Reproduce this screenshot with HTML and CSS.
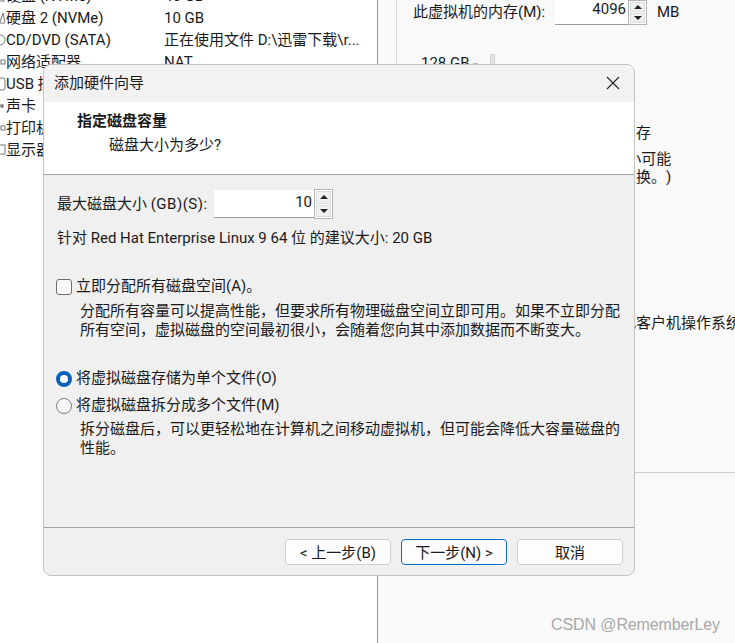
FILE: index.html
```html
<!DOCTYPE html>
<html lang="zh-CN">
<head>
    <meta charset="UTF-8">
    <title>添加硬件向导</title>
    <link rel="stylesheet" href="styles.css">
</head>
<body>

<div class="page">
    <div class="devices">
        <div class="device">
            <svg class="device-icon" viewBox="0 0 6 14"><rect x="-6" y="2" width="10" height="10" fill="none" stroke="#777"/></svg>
            <span class="device-name">硬盘 (NVMe)</span>
            <span>40 GB</span>
        </div>
        <div class="device">
            <svg class="device-icon" viewBox="0 0 6 14"><path d="M0 11L3 2L5 11M0 12H5" fill="none" stroke="#777"/></svg>
            <span class="device-name">硬盘 2 (NVMe)</span>
            <span>10 GB</span>
        </div>
        <div class="device">
            <svg class="device-icon" viewBox="0 0 6 14"><circle cx="0" cy="7" r="5" fill="none" stroke="#777"/></svg>
            <span class="device-name">CD/DVD (SATA)</span>
            <span>正在使用文件 D:\迅雷下载\r...</span>
        </div>
        <div class="device">
            <svg class="device-icon" viewBox="0 0 6 14"><rect x="1" y="5" width="4" height="4" fill="none" stroke="#777"/></svg>
            <span class="device-name">网络适配器</span>
            <span>NAT</span>
        </div>
        <div class="device">
            <svg class="device-icon" viewBox="0 0 6 14"><rect x="-3" y="1" width="8" height="12" rx="2" fill="none" stroke="#777"/></svg>
            <span class="device-name">USB 控制器</span>
        </div>
        <div class="device">
            <svg class="device-icon" viewBox="0 0 6 14"><circle cx="2" cy="7" r="2" fill="#888"/></svg>
            <span class="device-name">声卡</span>
        </div>
        <div class="device">
            <svg class="device-icon" viewBox="0 0 6 14"><rect x="1" y="5" width="4" height="4" fill="none" stroke="#777"/></svg>
            <span class="device-name">打印机</span>
        </div>
        <div class="device">
            <svg class="device-icon" viewBox="0 0 6 14"><rect x="-2" y="2" width="7" height="9" fill="none" stroke="#777"/></svg>
            <span class="device-name">显示器</span>
        </div>
    </div>

    <div class="settings">
        <div class="memory-box">
            <div class="memory-row">
                <span class="memory-label">此虚拟机的内存(M):</span>
                <div class="spinner memory-spinner">
                    <div class="spinner-value">4096</div>
                    <div class="spinner-buttons">
                        <div class="spinner-button"><i class="arrow-up"></i></div>
                        <div class="spinner-button"><i class="arrow-down"></i></div>
                    </div>
                </div>
                <span class="memory-unit">MB</span>
            </div>
            <div class="scale-row">
                <span class="scale-label">128 GB</span>
                <i class="scale-tick"></i>
                <i class="scale-track"></i>
            </div>
            <div class="note note-max">最大建议内存</div>
            <div class="note note-swap">(超出此大小可能<br>发生内存交换。)</div>
            <div class="note note-guest">建议用于此客户机操作系统的内存</div>
        </div>
    </div>
</div>

<div class="dialog">
    <div class="dialog-title">
        <span>添加硬件向导</span>
        <svg class="close-icon" viewBox="0 0 14 14"><path d="M1 1L13 13M13 1L1 13" stroke="#222" stroke-width="1.1"/></svg>
    </div>
    <div class="dialog-header">
        <div class="header-title">指定磁盘容量</div>
        <div class="header-sub">磁盘大小为多少?</div>
    </div>
    <div class="dialog-body">
        <div class="size-row">
            <span class="size-label">最大磁盘大小 <span class="size-key">(GB)(S):</span></span>
            <div class="spinner disk-spinner">
                <div class="spinner-value">10</div>
                <div class="spinner-buttons">
                    <div class="spinner-button"><i class="arrow-up"></i></div>
                    <div class="spinner-button"><i class="arrow-down"></i></div>
                </div>
            </div>
        </div>
        <div class="hint">针对 Red Hat Enterprise Linux 9 64 位 的建议大小: 20 GB</div>

        <div class="option option-alloc">
            <i class="checkbox"></i>
            <span>立即分配所有磁盘空间(A)。</span>
        </div>
        <p class="option-desc alloc-desc">分配所有容量可以提高性能，但要求所有物理磁盘空间立即可用。如果不立即分配所有空间，虚拟磁盘的空间最初很小，会随着您向其中添加数据而不断变大。</p>

        <div class="option option-single">
            <i class="radio radio-on"></i>
            <span>将虚拟磁盘存储为单个文件(O)</span>
        </div>
        <div class="option option-split">
            <i class="radio"></i>
            <span>将虚拟磁盘拆分成多个文件(M)</span>
        </div>
        <p class="option-desc split-desc">拆分磁盘后，可以更轻松地在计算机之间移动虚拟机，但可能会降低大容量磁盘的性能。</p>
    </div>
    <div class="dialog-footer">
        <button class="wizard-button">&lt; 上一步(B)</button>
        <button class="wizard-button wizard-button-default">下一步(N) &gt;</button>
        <button class="wizard-button">取消</button>
    </div>
</div>

<div class="watermark">CSDN @RememberLey</div>

</body>
</html>
```

FILE: styles.css
```css
body {
    margin: 0;
    width: 735px;
    height: 643px;
    overflow: hidden;
    position: relative;
    background-color: #f9f9f9;
    color: #1a1a1a;
    font-family: Roboto, "Noto Sans CJK SC", sans-serif;
    font-size: 15px;
    line-height: 18px;
    text-spacing-trim: space-all;
}

.page {
    display: grid;
    grid-template-columns: 378px 1fr;
    height: 643px;
}

/* left list, mostly hidden behind the dialog */
.devices {
    background-color: #fff;
    border-right: 1px solid #8e8e93;
    margin-top: -15px;
    margin-bottom: -15px;
}

.device {
    display: flex;
    align-items: center;
    height: 22px;
    white-space: nowrap;
}

.device-icon {
    width: 6px;
    height: 14px;
    flex: none;
}

.device-name {
    width: 158px;
    flex: none;
}

/* right pane */
.settings {
    padding-left: 18px;
}

.memory-box {
    box-sizing: border-box;
    height: 473px;
    border-left: 1px solid #d9d9d9;
    border-bottom: 1px solid #cfcfcf;
    white-space: nowrap;
    overflow: hidden;
}

.memory-row {
    display: flex;
    height: 25px;
    padding-left: 16px;
    line-height: 24px;
}

.memory-label {
    width: 142px;
}

.memory-unit {
    margin-left: 10px;
}

.memory-spinner {
    height: 25px;
    line-height: 18px;
}

.memory-spinner .spinner-value {
    width: 73px;
}

.scale-row {
    display: flex;
    align-items: center;
    height: 18px;
    margin-top: 29px;
    padding-left: 24px;
}

.scale-label {
    width: 44px;
}

.scale-tick {
    width: 5px;
    height: 1px;
    margin-left: 8px;
    background-color: #bbb;
}

.scale-track {
    width: 3px;
    height: 18px;
    margin-left: 12px;
    margin-top: 2px;
    background-color: #e4e4e4;
    border: 1px solid #d4d4d4;
}

.note {
    margin-left: 164px;
}

.note-max {
    margin-top: 52px;
}

.note-swap {
    margin-top: 8px;
}

.note-guest {
    margin-top: 128px;
}

/* spinner, shared by memory and disk size */
.spinner {
    display: flex;
}

.spinner-value {
    box-sizing: border-box;
    background-color: #fff;
    border-bottom: 1px solid #9a9a9a;
    padding-right: 2px;
    text-align: right;
}

.spinner-buttons {
    display: flex;
    flex-direction: column;
    gap: 1px;
    width: 19px;
    box-sizing: border-box;
    border: 1px solid #b4b4b4;
    background-color: #fff;
    padding: 1px;
}

.spinner-button {
    flex: 1;
    display: flex;
    align-items: center;
    justify-content: center;
    background-color: #f0f0f0;
    border: 1px solid #dcdcdc;
}

.arrow-up {
    border-left: 4px solid transparent;
    border-right: 4px solid transparent;
    border-bottom: 4px solid #222;
}

.arrow-down {
    border-left: 4px solid transparent;
    border-right: 4px solid transparent;
    border-top: 4px solid #222;
}

/* dialog */
.dialog {
    position: absolute;
    left: 43px;
    top: 64px;
    width: 592px;
    height: 512px;
    box-sizing: border-box;
    display: flex;
    flex-direction: column;
    border: 1px solid #c4c4c4;
    border-radius: 8px;
    overflow: hidden;
    background-color: #f0f0f0;
}

.dialog-title {
    box-sizing: border-box;
    display: flex;
    align-items: center;
    justify-content: space-between;
    height: 37px;
    flex: none;
    padding: 0 14px 2px 10px;
    background-color: #f3f2f3;
}

.close-icon {
    width: 14px;
    height: 14px;
}

.dialog-header {
    box-sizing: border-box;
    height: 73px;
    flex: none;
    padding: 10px 0 0 33px;
    background-color: #fff;
    border-bottom: 1px solid #a0a0a0;
}

.header-title {
    font-weight: bold;
}

.header-sub {
    margin-top: 6px;
    padding-left: 32px;
}

.dialog-body {
    flex: 1;
    padding-left: 12px;
    line-height: 19px;
}

.size-row {
    display: flex;
    align-items: center;
    height: 30px;
    margin-top: 14px;
    padding-left: 1px;
}

.size-label {
    width: 157px;
    white-space: nowrap;
}

.size-key {
    letter-spacing: 0.5px;
}

.disk-spinner {
    height: 30px;
    line-height: 24px;
}

.disk-spinner .spinner-value {
    width: 100px;
    margin: 1px 0;
}

.hint {
    margin-top: 10px;
    padding-left: 1px;
}

.option {
    display: flex;
    align-items: center;
    gap: 4px;
}

.option-alloc {
    margin-top: 29px;
}

.option-single {
    margin-top: 29px;
}

.option-split {
    margin-top: 8px;
}

.option-desc {
    width: 545px;
    margin: 6px 0 0 24px;
}

.split-desc {
    margin-top: 5px;
}

.checkbox {
    box-sizing: border-box;
    width: 16px;
    height: 16px;
    background-color: #fbfbfb;
    border: 1px solid #707070;
    border-radius: 3px;
}

.radio {
    box-sizing: border-box;
    width: 16px;
    height: 16px;
    background-color: #f6f6f6;
    border: 1px solid #808080;
    border-radius: 50%;
}

.radio-on {
    background-color: #fff;
    border: 4px solid #0a63b8;
}

.dialog-footer {
    box-sizing: border-box;
    height: 48px;
    flex: none;
    display: flex;
    justify-content: flex-end;
    gap: 10px;
    padding: 11px 11px 0 0;
    border-top: 1px solid #a0a0a0;
}

.wizard-button {
    box-sizing: border-box;
    width: 106px;
    height: 26px;
    padding: 1px 0 0;
    font: inherit;
    color: inherit;
    background-color: #fdfdfd;
    border: 1px solid #cfcfcf;
    border-radius: 4px;
}

.wizard-button-default {
    border-color: #0a6cc4;
}

.watermark {
    position: absolute;
    right: 15px;
    top: 616px;
    font-family: "Liberation Sans", sans-serif;
    font-size: 16px;
    letter-spacing: -0.12px;
    color: #a8a8a8;
}
```
